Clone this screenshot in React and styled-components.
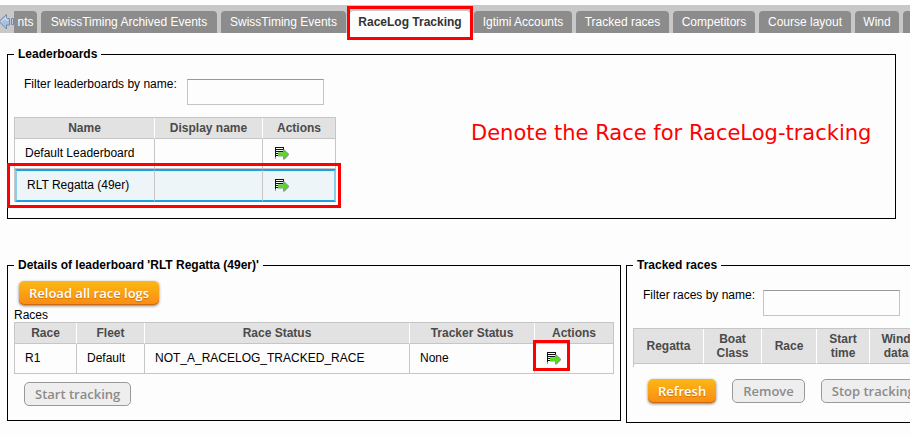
import React from "react";
import styled, { createGlobalStyle, css } from "styled-components";

const GlobalStyle = createGlobalStyle`
  body {
    margin: 0;
    background: #fdfdfd;
    color: #000;
    font: 12px/14px "Liberation Sans", Arial, sans-serif;
    overflow: hidden;
  }
  *, *::before { box-sizing: border-box; }
`;

const Page = styled.div`
  padding-top: 5px;
  overflow: hidden;
`;

const redFrame = css`
  content: "";
  position: absolute;
  border: 3px solid #fe0000;
  pointer-events: none;
`;

const TabBar = styled.nav`
  display: flex;
  gap: 4px;
  height: 28px;
  padding-top: 6px;
  background: #c8c8c8;
`;

const ScrollButton = styled.button`
  flex: none;
  width: 14px;
  margin-right: -4px;
  padding: 0;
  border: 0;
  background: #c8c8c8;
  svg { display: block; }
`;

const Tab = styled.button`
  position: relative;
  flex: none;
  width: ${(p) => p.$width}px;
  padding: 0 0 1px;
  border: 0;
  border-radius: ${(p) => (p.$cut ? "0 4px 0 0" : "4px 4px 0 0")};
  background: #8c8c8c;
  color: #fff;
  font: inherit;
  white-space: nowrap;
  ${(p) =>
    p.$active &&
    css`
      background: #fdfdfd;
      color: #333;
      font-weight: bold;
      &::before {
        ${redFrame}
        inset: -5px -3px -7px;
      }
    `}
`;

const Main = styled.main`
  padding: 14px 14px 0 7px;
`;

const Panel = styled.fieldset`
  flex: ${(p) => (p.$grow ? "1 0 auto" : "none")};
  min-width: 0;
  margin: 0;
  padding: ${(p) => p.$top}px 6px ${(p) => p.$bottom}px;
  border: 1px solid #000;
`;

const Legend = styled.legend`
  padding: 0 4px;
  font-weight: bold;
`;

const Columns = styled.div`
  display: flex;
  align-items: flex-start;
  gap: 5px;
  margin-top: 39px;
`;

const FilterRow = styled.div`
  display: flex;
  gap: 7px;
  padding-left: 10px;
  margin-bottom: 12px;
`;

const FilterLabel = styled.label`
  width: ${(p) => p.$width}px;
  margin-top: -2px;
  white-space: nowrap;
`;

const FilterInput = styled.input`
  width: 137px;
  height: 26px;
  border: 1px solid #c4c4c4;
  border-top-color: #999;
  background: #fdfdfd;
  font: inherit;
`;

const Table = styled.table`
  table-layout: fixed;
  width: ${(p) => p.$width}px;
  border-collapse: separate;
  border-spacing: 0;
  border: solid #c6c6c6;
  border-width: 1px 0 0 1px;
`;

const HeadCell = styled.th`
  width: ${(p) => p.$width}px;
  height: ${(p) => (p.$tall ? 35 : 21)}px;
  padding: 0 8px;
  border-right: 1px solid #fff;
  border-bottom: 1px solid #c6c6c6;
  background: #e2e2e2;
  color: #4b4a4a;
  &:last-child { border-right-color: #c6c6c6; }
`;

const Cell = styled.td`
  position: relative;
  height: 30px;
  padding: 0 10px 2px;
  border: solid #c6c6c6;
  border-width: 0 1px 1px 0;
  white-space: nowrap;
`;

const Row = styled.tr`
  ${(p) =>
    p.$selected &&
    css`
      position: relative;
      ${Cell} {
        position: static;
        height: 33px;
        background: #edf5f9;
        border-top: 2px solid #1f9fe0;
        border-bottom: 2px solid #1f9fe0;
      }
      ${Cell}:first-child { border-left: 2px solid #88cdec; }
      ${Cell}:last-child { border-right: 2px solid #88cdec; }
      ${Cell}:first-child::before {
        ${redFrame}
        inset: -6px -5px -6px -8px;
      }
    `}
`;

const IconButton = styled.button`
  display: block;
  position: relative;
  width: 16px;
  height: 16px;
  padding: 0;
  border: 0;
  background: none;
  svg { display: block; }
  ${(p) =>
    p.$marked &&
    css`
      &::before {
        ${redFrame}
        inset: -10px -9px -5px -12px;
      }
    `}
`;

const ButtonRow = styled.div`
  display: flex;
  gap: 16px;
  padding-left: ${(p) => p.$indent}px;
`;

const Button = styled.button`
  flex: none;
  height: 24px;
  padding: 0 10px;
  border: 0;
  border-radius: 5px;
  background: linear-gradient(#fbb815, #fb8b14);
  box-shadow: inset 0 -1px 0 #c96a10, 0 1px 3px rgba(0, 0, 0, 0.5);
  color: #fff;
  font: 600 13px/22px "Open Sans", sans-serif;
  text-shadow: 0 1px 1px rgba(120, 60, 0, 0.4);
  white-space: nowrap;
  &:disabled {
    border: 1px solid #999;
    background: #eee;
    box-shadow: none;
    color: #8b8b8b;
    text-shadow: none;
  }
`;

const Caption = styled.div`
  margin: 3px 0 0;
`;

const TableFoot = styled.div`
  height: ${(p) => p.$height}px;
`;

const EmptyBody = styled.div`
  height: 3px;
  margin-bottom: 12px;
  border-left: 1px solid #c6c6c6;
`;

const Note = styled.p`
  position: absolute;
  top: 120px;
  left: 471px;
  margin: 0;
  color: #fe0000;
  font: 21px/26px "DejaVu Sans", sans-serif;
  white-space: nowrap;
`;

function DenoteIcon() {
  return (
    <svg width="16" height="16" viewBox="0 0 16 16" shapeRendering="crispEdges" aria-hidden="true">
      <path d="M2 2h9v9H3v1H2z" fill="#111" />
      <path d="M3 3h7v1H3zM3 5h7v1H3zM3 7h7v1H3zM3 9h3v1H3z" fill="#fff" />
      <path d="M2 12h1v2H2z" fill="#999" />
      <path d="M5 7.500h5V4.500h1.500L16 9v1l-4.500 4.500H10v-3H5z" fill="#8a9486" shapeRendering="auto" />
      <path d="M5 7.500h5.500V5L15.500 9.500l-5 4v-2.500H5z" fill="#54dc24" shapeRendering="auto" />
    </svg>
  );
}

function ArrowIcon() {
  return (
    <svg width="14" height="22" viewBox="0 0 14 22" aria-hidden="true">
      <path d="M-1 10.500 6.500 3.500v4h3v6.500h-3v4z" fill="#a9c0dc" stroke="#7189ab" />
      <path d="M1.500 10.500 6 6.500v2.500h2.500" fill="none" stroke="#dce7f3" />
      <path d="M11.500 7.500H13.500v6h-2z" fill="#b7cbe2" stroke="#7189ab" />
    </svg>
  );
}

const tabs = [
  ["SwissTiming Archived Events", 176],
  ["SwissTiming Events", 125],
  ["RaceLog Tracking", 120],
  ["Igtimi Accounts", 98],
  ["Tracked races", 93],
  ["Competitors", 82],
  ["Course layout", 92],
  ["Wind", 44],
  ["", 60],
];

const heads = (list, tall) => (
  <thead>
    <tr>
      {list.map(([name, width]) => (
        <HeadCell key={name} $width={width} $tall={tall} scope="col">
          {name}
        </HeadCell>
      ))}
    </tr>
  </thead>
);

const leaderboards = [
  { name: "Default Leaderboard" },
  { name: "RLT Regatta (49er)", selected: true },
];

export default function App() {
  return (
    <Page>
      <GlobalStyle />
      <TabBar>
        <ScrollButton aria-label="Scroll tabs left">
          <ArrowIcon />
        </ScrollButton>
        <Tab $width={23} $cut>nts</Tab>
        {tabs.map(([name, width]) => (
          <Tab key={name} $width={width} $active={name === "RaceLog Tracking"}>
            {name}
          </Tab>
        ))}
      </TabBar>
      <Main>
        <Panel $top={18} $bottom={16}>
          <Legend>Leaderboards</Legend>
          <FilterRow>
            <FilterLabel htmlFor="filter-leaderboards" $width={156}>
              Filter leaderboards by name:
            </FilterLabel>
            <FilterInput id="filter-leaderboards" />
          </FilterRow>
          <Table $width={322}>
            {heads([["Name", 140], ["Display name", 108], ["Actions", 73]])}
            <tbody>
              {leaderboards.map((board) => (
                <Row key={board.name} $selected={board.selected}>
                  <Cell>{board.name}</Cell>
                  <Cell />
                  <Cell>
                    <IconButton aria-label="Denote for RaceLog tracking">
                      <DenoteIcon />
                    </IconButton>
                  </Cell>
                </Row>
              ))}
            </tbody>
          </Table>
        </Panel>
        <Columns>
          <Panel $top={9} $bottom={14}>
            <Legend>Details of leaderboard 'RLT Regatta (49er)'</Legend>
            <ButtonRow $indent={5}>
              <Button>Reload all race logs</Button>
            </ButtonRow>
            <Caption>Races</Caption>
            <Table $width={600}>
              {heads([
                ["Race", 62],
                ["Fleet", 68],
                ["Race Status", 265],
                ["Tracker Status", 125],
                ["Actions", 79],
              ])}
              <tbody>
                <Row>
                  <Cell>R1</Cell>
                  <Cell>Default</Cell>
                  <Cell>NOT_A_RACELOG_TRACKED_RACE</Cell>
                  <Cell>None</Cell>
                  <Cell>
                    <IconButton $marked aria-label="Denote race for RaceLog tracking">
                      <DenoteIcon />
                    </IconButton>
                  </Cell>
                </Row>
              </tbody>
            </Table>
            <TableFoot $height={8} />
            <ButtonRow $indent={10}>
              <Button disabled>Start tracking</Button>
            </ButtonRow>
          </Panel>
          <Panel $grow $top={18} $bottom={19}>
            <Legend>Tracked races</Legend>
            <FilterRow>
              <FilterLabel htmlFor="filter-races" $width={113}>
                Filter races by name:
              </FilterLabel>
              <FilterInput id="filter-races" />
            </FilterRow>
            <Table $width={290}>
              {heads(
                [
                  ["Regatta", 70],
                  ["Boat Class", 58],
                  ["Race", 55],
                  ["Start time", 53],
                  ["Wind data", 53],
                ],
                true
              )}
            </Table>
            <EmptyBody />
            <ButtonRow $indent={15}>
              <Button>Refresh</Button>
              <Button disabled>Remove</Button>
              <Button disabled>Stop tracking</Button>
            </ButtonRow>
          </Panel>
        </Columns>
      </Main>
      <Note>Denote the Race for RaceLog-tracking</Note>
    </Page>
  );
}
